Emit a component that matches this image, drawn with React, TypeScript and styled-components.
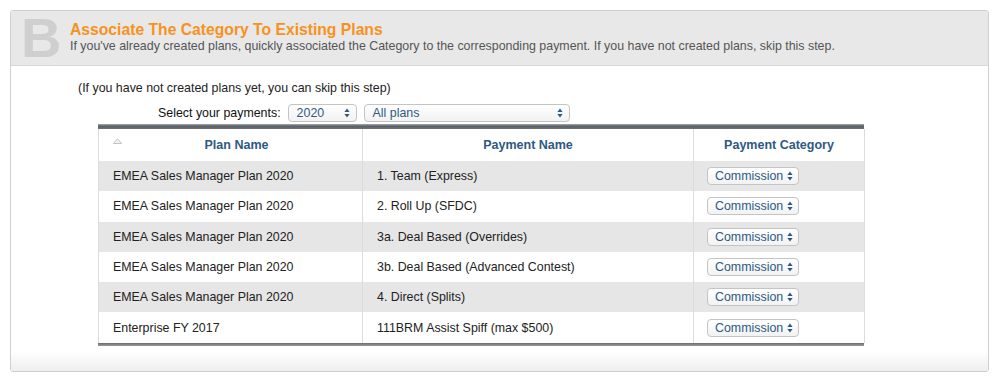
import React from 'react';
import styled, { createGlobalStyle } from 'styled-components';

type Row = {
    plan: string,
    payment: string,
}

const rows: Row[] = [
    { plan: 'EMEA Sales Manager Plan 2020', payment: '1. Team (Express)' },
    { plan: 'EMEA Sales Manager Plan 2020', payment: '2. Roll Up (SFDC)' },
    { plan: 'EMEA Sales Manager Plan 2020', payment: '3a. Deal Based (Overrides)' },
    { plan: 'EMEA Sales Manager Plan 2020', payment: '3b. Deal Based (Advanced Contest)' },
    { plan: 'EMEA Sales Manager Plan 2020', payment: '4. Direct (Splits)' },
    { plan: 'Enterprise FY 2017', payment: '111BRM Assist Spiff (max $500)' },
];

const Arrows = () => (
    <svg width="6" height="10" viewBox="0 0 6 10">
        <path d="M3 0.5 L5.6 4 L0.4 4 Z" fill="#2d5984" />
        <path d="M3 9.5 L5.6 6 L0.4 6 Z" fill="#2d5984" />
    </svg>
);

const SortIcon = () => (
    <svg width="9" height="6" viewBox="0 0 9 6">
        <path d="M0.5 5.5 L4.5 0.8 L8.5 5.5 Z" fill="#f2f2f2" stroke="#b5b5b5" strokeWidth="0.8" />
    </svg>
);

export default function App() {
    return (
        <>
            <GlobalStyle />
            <Page>
                <Panel>
                    <Header>
                        <StepLetter>B</StepLetter>
                        <HeaderText>
                            <Title>Associate The Category To Existing Plans</Title>
                            <Subtitle>
                                If you've already created plans, quickly associated the Category to the corresponding payment. If you have not created plans, skip this step.
                            </Subtitle>
                        </HeaderText>
                    </Header>
                    <Body>
                        <Note>(If you have not created plans yet, you can skip this step)</Note>
                        <FilterRow>
                            <FilterLabel>Select your payments:</FilterLabel>
                            <SelectBox width={69}>
                                <span>2020</span>
                                <Arrows />
                            </SelectBox>
                            <SelectBox width={206}>
                                <span>All plans</span>
                                <Arrows />
                            </SelectBox>
                        </FilterRow>
                        <TableWrap>
                            <TopBar />
                            <Table>
                                <colgroup>
                                    <col style={{ width: 264 }} />
                                    <col style={{ width: 331 }} />
                                    <col style={{ width: 171 }} />
                                </colgroup>
                                <thead>
                                    <tr>
                                        <Th sortable>
                                            <SortSlot><SortIcon /></SortSlot>
                                            Plan Name
                                        </Th>
                                        <Th>Payment Name</Th>
                                        <Th>Payment Category</Th>
                                    </tr>
                                </thead>
                                <tbody>
                                    {rows.map((r, i) => (
                                        <Tr key={i} odd={i % 2 === 0}>
                                            <Td>{r.plan}</Td>
                                            <Td>{r.payment}</Td>
                                            <Td>
                                                <CategorySelect>
                                                    <span>Commission</span>
                                                    <Arrows />
                                                </CategorySelect>
                                            </Td>
                                        </Tr>
                                    ))}
                                </tbody>
                            </Table>
                            <BottomBar />
                        </TableWrap>
                    </Body>
                    <Footer />
                </Panel>
            </Page>
        </>
    );
}

const GlobalStyle = createGlobalStyle`
    html, body {
        margin: 0;
        padding: 0;
        background: #ffffff;
        font-family: "Liberation Sans", Arial, sans-serif;
    }
`

const Page = styled.div`
    width: 999px;
    height: 382px;
    padding: 10px 10px 0 10px;
    box-sizing: border-box;
`

const Panel = styled.div`
    width: 979px;
    border: 1px solid #cfcfcf;
    border-radius: 3px;
    box-sizing: border-box;
    background: #fff;
`

const Header = styled.div`
    height: 55px;
    background: #e8e8e8;
    border-bottom: 1px solid #d6d6d6;
    border-radius: 2px 2px 0 0;
    display: flex;
    align-items: flex-start;
    box-sizing: border-box;
`

const StepLetter = styled.div`
    width: 59px;
    padding-left: 10px;
    margin-top: -6px;
    box-sizing: border-box;
    font-family: "Liberation Sans", Arial, sans-serif;
    font-weight: bold;
    font-size: 56px;
    line-height: normal;
    color: #cfcfcf;
`

const HeaderText = styled.div`
    display: flex;
    flex-direction: column;
    padding-top: 10px;
`

const Title = styled.div`
    font-size: 15.7px;
    font-weight: bold;
    color: #f7921e;
    line-height: 18px;
`

const Subtitle = styled.div`
    font-size: 12.4px;
    color: #555;
    line-height: 15px;
`

const Body = styled.div`
    padding: 15px 0 0 0;
`

const Note = styled.div`
    padding-left: 67px;
    font-size: 12.4px;
    color: #222;
    line-height: 14px;
`

const FilterRow = styled.div`
    display: flex;
    align-items: center;
    padding-left: 147px;
    margin-top: 9px;
    height: 18px;
    gap: 7px;
`

const FilterLabel = styled.span`
    font-size: 12.4px;
    color: #111;
`

const SelectBox = styled.div<{ width: number }>`
    width: ${p => p.width}px;
    height: 18px;
    box-sizing: border-box;
    border: 1px solid #c4c4c4;
    border-radius: 4px;
    background: linear-gradient(#ffffff, #f2f2f2);
    display: flex;
    align-items: center;
    justify-content: space-between;
    padding: 0 6px 0 8px;
    font-size: 12.4px;
    color: #2d5984;
`

const TableWrap = styled.div`
    margin-left: 87px;
    width: 766px;
    margin-top: 2px;
`

const TopBar = styled.div`
    height: 5px;
    background: linear-gradient(#a6aaae, #5a5f65 45%, #6e7378);
`

const BottomBar = styled.div`
    height: 3px;
    background: linear-gradient(#6c6c6c, #9a9a9a);
`

const Table = styled.table`
    width: 766px;
    border-collapse: collapse;
    table-layout: fixed;
    border-left: 1px solid #dcdcdc;
    border-right: 1px solid #dcdcdc;
`

const Th = styled.th<{ sortable?: boolean }>`
    position: relative;
    height: 32px;
    padding: 0 0 0 ${p => (p.sortable ? 12 : 0)}px;
    font-size: 12.5px;
    font-weight: bold;
    color: #2d5984;
    text-align: center;
    border-left: 1px solid #dcdcdc;
    background: #fff;
`

const SortSlot = styled.span`
    position: absolute;
    left: 14px;
    top: 9px;
    line-height: 0;
`

const Tr = styled.tr<{ odd: boolean }>`
    background: ${p => (p.odd ? '#e6e6e6' : '#ffffff')};
`

const Td = styled.td`
    height: 30.3px;
    padding: 0 0 0 14px;
    font-size: 12.4px;
    color: #222;
    border-left: 1px solid #dcdcdc;
    white-space: nowrap;
`

const CategorySelect = styled.div`
    width: 92px;
    height: 18px;
    margin-left: -1px;
    box-sizing: border-box;
    border: 1px solid #c4c4c4;
    border-radius: 4px;
    background: linear-gradient(#ffffff, #f2f2f2);
    display: flex;
    align-items: center;
    justify-content: space-between;
    padding: 0 5px 0 7px;
    font-size: 12.4px;
    color: #2d5984;
`

const Footer = styled.div`
    height: 20px;
    margin-top: 5px;
    border-radius: 0 0 2px 2px;
    background: linear-gradient(#ffffff, #eeeeee);
`
